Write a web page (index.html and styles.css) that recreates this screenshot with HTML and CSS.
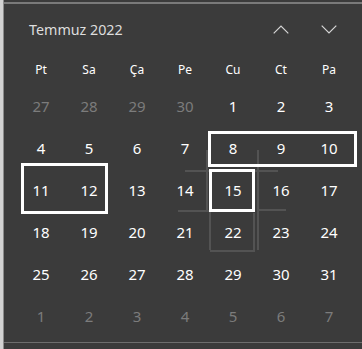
FILE: index.html
```html
<!DOCTYPE html>
<html>
  <head>
    <link rel="stylesheet" href="styles.css">
  </head>
  <body>
    <div class="edge"></div>
    <div class="calendar">
      <div class="header">
        <span class="title">Temmuz 2022</span>
        <div class="nav">
          <button class="nav-btn" aria-label="Önceki ay">
            <svg width="16" height="9" viewBox="0 0 16 9">
              <polyline points="0.7,8.3 8,1 15.3,8.3" fill="none" stroke="#d6d6d6" stroke-width="1.2" />
            </svg>
          </button>
          <button class="nav-btn" aria-label="Sonraki ay">
            <svg width="16" height="9" viewBox="0 0 16 9">
              <polyline points="0.7,0.7 8,8 15.3,0.7" fill="none" stroke="#d6d6d6" stroke-width="1.2" />
            </svg>
          </button>
        </div>
      </div>

      <div class="weekdays">
        <span>Pt</span><span>Sa</span><span>Ça</span><span>Pe</span><span>Cu</span><span>Ct</span><span>Pa</span>
      </div>

      <div id="days" class="days"></div>
    </div>

    <!-- hover izleri -->
    <svg class="ghost" width="362" height="349" viewBox="0 0 362 349">
      <g stroke="#535353" stroke-width="2" fill="none">
        <line x1="207" y1="150" x2="207" y2="212" />
        <line x1="210" y1="212" x2="210" y2="250" />
        <line x1="258" y1="150" x2="258" y2="250" />
        <line x1="254" y1="213" x2="254" y2="250" />
        <line x1="185" y1="171" x2="209" y2="171" />
        <line x1="255" y1="171" x2="278" y2="171" />
        <line x1="178" y1="211" x2="209" y2="211" />
        <line x1="258" y1="210" x2="286" y2="210" />
        <line x1="210" y1="251" x2="255" y2="251" />
      </g>
    </svg>

    <div class="select select-week"></div>
    <div class="select select-pair"></div>
    <div class="select select-day"></div>

    <script>
      const days = document.getElementById("days");

      // Haziran sonu, Temmuz, Ağustos başı
      const cells = [];
      [27, 28, 29, 30].forEach((d) => cells.push({ d: d, other: true }));
      for (let d = 1; d <= 31; d++) cells.push({ d: d, other: false });
      for (let d = 1; cells.length < 42; d++) cells.push({ d: d, other: true });

      cells.forEach((c) => {
        const div = document.createElement("div");
        div.className = c.other ? "day other" : "day";
        div.innerText = c.d;
        days.appendChild(div);
      });
    </script>
  </body>
</html>
```

FILE: styles.css
```css
body {
  margin: 0;
  width: 362px;
  height: 349px;
  display: flex;
  background-color: #3b3b3b;
  font-family: "Noto Sans", "Open Sans", sans-serif;
  color: #fff;
  overflow: hidden;
}
.edge {
  width: 3px;
  background-color: #d2d2d2;
  border-right: 1px solid #8c8c8c;
}
.calendar {
  flex: 1;
  margin-top: 2px;
  height: 341px;
  border-top: 2px solid #7a7a7a;
  border-bottom: 1px solid #6e6e6e;
  box-sizing: border-box;
  padding-left: 13px;
}
.header {
  height: 49px;
  display: flex;
  align-items: center;
  justify-content: space-between;
}
.title {
  padding-left: 12px;
  font-size: 14.3px;
  color: #dedede;
  margin-top: 2px;
}
.nav {
  display: flex;
  gap: 16px;
  padding-right: 17px;
  margin-top: 2px;
}
.nav-btn {
  width: 32px;
  height: 32px;
  padding: 0;
  border: none;
  background: none;
  display: flex;
  align-items: center;
  justify-content: center;
}
.weekdays {
  display: grid;
  grid-template-columns: repeat(7, 48px);
  height: 32px;
  align-items: center;
  font-size: 12px;
}
.weekdays span {
  text-align: center;
}
.days {
  display: grid;
  grid-template-columns: repeat(7, 48px);
  grid-auto-rows: 42px;
}
.day {
  display: flex;
  align-items: center;
  justify-content: center;
  font-size: 15px;
}
.day.other {
  color: #7c7c7c;
}
.ghost {
  position: absolute;
  top: 0;
  left: 0;
  pointer-events: none;
}
.select {
  position: absolute;
  border: 3px solid #fff;
  box-sizing: border-box;
}
.select-week {
  left: 208px;
  top: 131px;
  width: 149px;
  height: 36px;
}
.select-pair {
  left: 21px;
  top: 163px;
  width: 87px;
  height: 51px;
}
.select-day {
  left: 209px;
  top: 169px;
  width: 46px;
  height: 43px;
}
```
